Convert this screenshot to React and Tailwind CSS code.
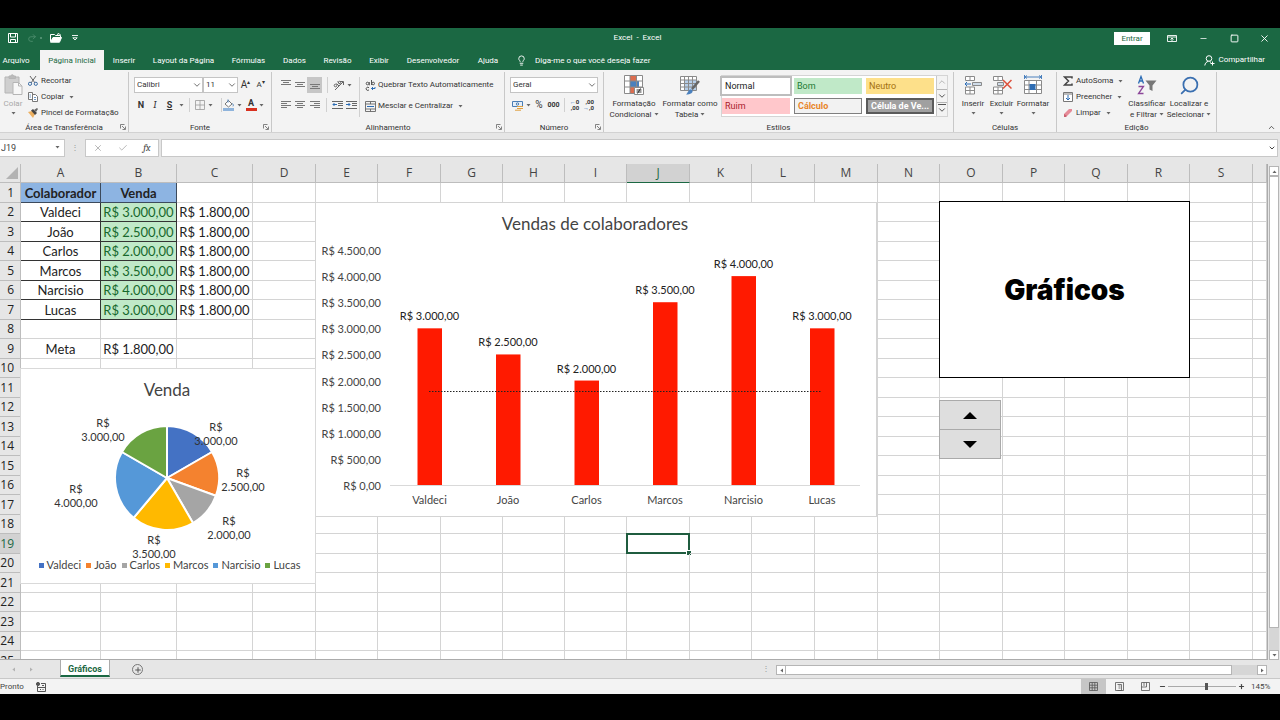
import { ChevronDown, Lightbulb, Minus, Plus, Redo2, Search, Square, X, Check } from "lucide-react";

const tabs = [
    { name: "Arquivo", width: "w-[32px] mr-2" },
    { name: "Página Inicial", width: "w-[64px]", active: true },
    { name: "Inserir", width: "w-[40px]" },
    { name: "Layout da Página", width: "w-[79px]" },
    { name: "Fórmulas", width: "w-[51px]" },
    { name: "Dados", width: "w-[41px]" },
    { name: "Revisão", width: "w-[45px]" },
    { name: "Exibir", width: "w-[38px]" },
    { name: "Desenvolvedor", width: "w-[70px]" },
    { name: "Ajuda", width: "w-[40px]" },
];

const styleCells = [
    { name: "Normal", look: "bg-white text-[#222] outline-2 outline-[#bdbdbd]" },
    { name: "Bom", look: "bg-[#c0e9c8] text-[#1d7a34]" },
    { name: "Neutro", look: "bg-[#fde08a] text-[#a3700f]" },
    { name: "Ruim", look: "bg-[#ffc7cb] text-[#a8202c]" },
    { name: "Cálculo", look: "bg-[#f2f2f2] text-[#e8862a] font-bold border border-[#7f7f7f]" },
    { name: "Célula de Ve...", look: "bg-[#a0a0a0] text-white font-bold border-2 border-[#5a5a5a]" },
];

const columns = [
    { name: "A", width: "w-[80px]" },
    { name: "B", width: "w-[76px]" },
    { name: "C", width: "w-[76px]" },
    { name: "D", width: "w-[63px]" },
    { name: "E", width: "w-[62px]" },
    { name: "F", width: "w-[63px]" },
    { name: "G", width: "w-[62px]" },
    { name: "H", width: "w-[62px]" },
    { name: "I", width: "w-[62px]" },
    { name: "J", width: "w-[63px]" },
    { name: "K", width: "w-[62px]" },
    { name: "L", width: "w-[63px]" },
    { name: "M", width: "w-[63px]" },
    { name: "N", width: "w-[62px]" },
    { name: "O", width: "w-[63px]" },
    { name: "P", width: "w-[62px]" },
    { name: "Q", width: "w-[63px]" },
    { name: "R", width: "w-[62px]" },
    { name: "S", width: "w-[63px]" },
    { name: "", width: "" },
];

const sales = [
    { name: "Valdeci", value: 3000, color: "#4472c4" },
    { name: "João", value: 2500, color: "#f4822f" },
    { name: "Carlos", value: 2000, color: "#a5a5a5" },
    { name: "Marcos", value: 3500, color: "#ffb900" },
    { name: "Narcisio", value: 4000, color: "#5598d8" },
    { name: "Lucas", value: 3000, color: "#6aa341" },
];

const meta = 1800;

const thousands = (value) =>
    value === 0 ? "0,00" : value < 1000 ? `${value},00` : `${Math.floor(value / 1000)}.${String(value % 1000).padStart(3, "0")},00`;
const money = (value) => `R$ ${thousands(value)}`;

const cells = { A1: "Colaborador", B1: "Venda", A9: "Meta", B9: money(meta) };
sales.forEach((sale, i) => {
    cells[`A${i + 2}`] = sale.name;
    cells[`B${i + 2}`] = money(sale.value);
    cells[`C${i + 2}`] = money(meta);
});

const cellLook = (col, row) => {
    if (row === 1 && (col === "A" || col === "B")) return "bg-[#8db4e2] font-bold border-[#3c4a5c]";
    if (row > 1 && row < 8 && col === "A") return "border-[#333]";
    if (row > 1 && row < 8 && col === "B") return "bg-[#c0e9c8] text-[#17682c] border-[#333]";
    return "border-[#d4d4d4]";
};

const Caret = () => (
    <svg className="w-[5px] h-[3px] shrink-0" viewBox="0 0 5 3">
        <path d="M0.5 0h4L2.5 2.6z" fill="#666" />
    </svg>
);

const CaretButton = ({ label }) => (
    <button aria-label={label} className="w-[8px] h-full flex items-center justify-center">
        <Caret />
    </button>
);

const Tool = ({ label, className, children }) => (
    <button aria-label={label} className={`h-full flex items-center justify-center ${className}`}>
        {children}
    </button>
);

const Divider = ({ className }) => <span className={`w-px h-full bg-[#d0d0d0] ${className}`} />;

const Group = ({ title, width, launcher, children }) => (
    <section className={`flex flex-col shrink-0 border-r border-[#c8c8c8] ${width}`}>
        <div className="flex h-[50px]">{children}</div>
        <div className="relative h-[10px] leading-[12px] text-center whitespace-nowrap">
            {title}
            {launcher && (
                <button aria-label={`Opções de ${title}`} className="absolute right-[2px] top-[2px]">
                    <svg className="size-[6px]" viewBox="0 0 6 6" fill="none" stroke="#666">
                        <path d="M0.5 4.5v-4h4M2 2l3 3M5.5 2.5v3h-3" strokeWidth="0.8" />
                    </svg>
                </button>
            )}
        </div>
    </section>
);

const BigButton = ({ lines, width, arrow, below, muted, children }) => (
    <button className={`flex flex-col items-center pt-[2px] shrink-0 whitespace-nowrap leading-[11px] ${width} ${muted ? "text-[#a8a8a8]" : ""}`}>
        <span className="h-[22px] mb-[2px] flex items-center">{children}</span>
        {lines.map((line, i) => (
            <span key={line} className="flex items-center gap-[2px]">
                {line}
                {arrow && i === lines.length - 1 && <Caret />}
            </span>
        ))}
        {below && <span className="h-[8px] flex items-center"><Caret /></span>}
    </button>
);

const SmallButton = ({ label, arrow, children }) => (
    <button className="h-[16px] flex items-center gap-[2px] whitespace-nowrap">
        <span className="w-[12px] flex justify-center shrink-0">{children}</span>
        {label}
        {arrow && <span className="ml-[3px]"><Caret /></span>}
    </button>
);

const RibbonSelect = ({ label, value, width }) => (
    <div className={`relative h-[16px] bg-white border border-[#c4c4c4] ${width}`}>
        <select aria-label={label} className="appearance-none w-full h-full pl-[2px] leading-[14px] bg-transparent">
            <option>{value}</option>
        </select>
        <ChevronDown className="absolute right-0 top-[2px] size-[10px] pointer-events-none text-[#555]" strokeWidth={2} />
    </div>
);

/* lines: list of [x1, x2] pairs, drawn 2px apart */
const LinesIcon = ({ lines, top = 1 }) => (
    <svg className="size-[10px]" viewBox="0 0 10 10" stroke="#777">
        {lines.map(([a, b], i) => (
            <path key={i} d={`M${a} ${top + i * 2 + 0.5}H${b}`} />
        ))}
    </svg>
);

const IndentIcon = ({ back }) => (
    <svg className="w-[12px] h-[10px]" viewBox="0 0 12 10" fill="none" stroke="#666">
        <path d="M0 1.5h11M6 3.5h5M6 5.5h5M0 8.5h11" />
        <path d={back ? "M5 4.5H1M2.5 3L1 4.5 2.5 6" : "M0 4.5h4M2.5 3L4 4.5 2.5 6"} stroke="#2b6cb5" />
    </svg>
);

const GridIcon = ({ className, children }) => (
    <svg className={className} viewBox="0 0 20 20" fill="none" stroke="#8a8a8a">
        {children}
    </svg>
);

const TitleBar = () => (
    <header className="bg-[#1b6843] text-white">
        <div className="h-[20px] flex items-center">
            <div className="flex-1 flex items-center pl-[7px]">
                <Tool label="Salvar" className="w-[12px]">
                    <svg className="size-[10px]" viewBox="0 0 10 10" fill="none" stroke="white">
                        <path d="M0.5 0.5h9v9h-9zM2.5 0.5v3.5h5v-3.5M2.5 9.5v-3h5v3" />
                    </svg>
                </Tool>
                <Tool label="Refazer" className="w-[12px] ml-[7px] text-[#4f8f70]"><Redo2 size={10} /></Tool>
                <span className="size-[2px] ml-[2px] bg-[#4f8f70]" />
                <Tool label="Abrir" className="w-[14px] ml-[7px]">
                    <svg className="w-[12px] h-[10px]" viewBox="0 0 12 10" fill="none" stroke="white">
                        <path d="M0.5 8.5V1.5h4l1 1h5v2" />
                        <path d="M0.5 9.2L3 4.5h8.500l-2 4.700z" fill="white" />
                        <path d="M7 1.500l2-1 1.500 1.500" />
                    </svg>
                </Tool>
                <Tool label="Personalizar acesso rápido" className="w-[8px] ml-[8px]">
                    <svg className="w-[6px] h-[6px]" viewBox="0 0 6 6" fill="none" stroke="white">
                        <path d="M0 0.500h6M0.800 2.800L3 5l2.200-2.200z" strokeWidth="0.9" />
                    </svg>
                </Tool>
            </div>
            <h1 className="pr-[12px] leading-[14px] whitespace-pre">Excel  -  Excel</h1>
            <div className="flex-1 flex items-center justify-end">
                <button className="h-[13px] w-[36px] mr-[14px] bg-white text-[#1b6843] leading-[13px]">Entrar</button>
                <Tool label="Opções de exibição" className="w-[16px] mr-[15px]">
                    <svg className="w-[10px] h-[7px]" viewBox="0 0 10 7" fill="none" stroke="white">
                        <path d="M0.500 0.500h9v6h-9zM0.500 2h9M5 6V3M3.500 4.500L5 3l1.500 1.500" strokeWidth="0.9" />
                    </svg>
                </Tool>
                <Tool label="Minimizar" className="w-[16px] mr-[15px]"><Minus size={9} strokeWidth={2} /></Tool>
                <Tool label="Maximizar" className="w-[16px] mr-[14px]"><Square size={9} strokeWidth={2.5} /></Tool>
                <Tool label="Fechar" className="w-[16px] mr-[8px]"><X size={11} strokeWidth={2} /></Tool>
            </div>
        </div>
        <nav className="h-[22px] flex items-end">
            {tabs.map((tab) => (
                <a key={tab.name} href="#" className={`h-[20px] leading-[21px] text-center whitespace-nowrap ${tab.width} ${tab.active ? "bg-[#f3f3f3] text-[#1b6843]" : ""}`}>
                    {tab.name}
                </a>
            ))}
            <label className="h-[20px] flex flex-1 items-center gap-[8px] ml-[8px]">
                <Lightbulb size={11} strokeWidth={2} />
                <input className="w-[140px] h-[20px] placeholder:text-white" placeholder="Diga-me o que você deseja fazer" />
            </label>
            <a href="#" className="h-[20px] flex items-center gap-[3px] pr-[15px]">
                <svg className="size-[11px]" viewBox="0 0 11 11" fill="none" stroke="white">
                    <circle cx="5" cy="3.500" r="2.800" />
                    <path d="M0.800 10.500c0.300-2.500 1.700-3.700 3.500-4.200M5.500 6.300l1.500 1.200M8.500 6.500v4M6.500 8.500h4" />
                </svg>
                Compartilhar
            </a>
        </nav>
    </header>
);

const Ribbon = () => (
    <div className="flex pt-[2px] bg-[#f3f3f3] text-[#333] border-b border-[#d2d2d2]">
        <Group title="Área de Transferência" width="w-[129px]" launcher>
            <BigButton lines={["Colar"]} width="w-[26px]" below muted>
                <svg className="w-[20px] h-[22px]" viewBox="0 0 20 22" fill="none" stroke="#b5b5b5">
                    <path d="M2 3h14v16H2z" fill="#cfcfcf" />
                    <path d="M6 4.500V2h2a1.200 1.200 0 0 1 2.500 0h2v2.500z" fill="#bbb" />
                    <path d="M10 8.500h5.500l3.500 3.500v8.500h-9z" fill="#f7f7f7" />
                    <path d="M15.500 8.500V12H19" />
                </svg>
            </BigButton>
            <div className="flex flex-col ml-[1px] pt-px">
                <SmallButton label="Recortar">
                    <svg className="size-[10px]" viewBox="0 0 10 10" fill="none">
                        <path d="M2 0l5 7M8 0L3 7" stroke="#666" />
                        <circle cx="2" cy="7.800" r="1.600" stroke="#3f6fa5" />
                        <circle cx="7.800" cy="7.800" r="1.600" stroke="#3f6fa5" />
                    </svg>
                </SmallButton>
                <SmallButton label="Copiar" arrow>
                    <svg className="size-[10px]" viewBox="0 0 10 10" fill="#fff" stroke="#777">
                        <path d="M0.500 0.500h4v7h-4z" />
                        <path d="M4.500 2.500h3l2 2v5h-5z" />
                        <path d="M6 5.500h2M6 7.500h2M1.500 3h1.500M1.500 5h1.500" stroke="#4a7db5" strokeWidth="0.8" />
                    </svg>
                </SmallButton>
                <SmallButton label="Pincel de Formatação">
                    <svg className="size-[10px]" viewBox="0 0 10 10">
                        <path d="M0 4l4-1 3 3-2 4z" fill="#edb060" />
                        <path d="M3 2.500l2-1.500 4 4-2 2z" fill="#444" />
                        <path d="M6 2l3-2 1 1-2 3z" fill="#666" />
                    </svg>
                </SmallButton>
            </div>
        </Group>

        <Group title="Fonte" width="w-[143px]" launcher>
            <div className="pl-[5px] pt-[5px] flex flex-col gap-[5px]">
                <div className="h-[16px] flex">
                    <RibbonSelect label="Fonte" value="Calibri" width="w-[69px]" />
                    <RibbonSelect label="Tamanho da fonte" value="11" width="w-[35px]" />
                    <Tool label="Aumentar fonte" className="w-[15px] text-[10px]">A<sup className="text-[6px]">▴</sup></Tool>
                    <Tool label="Diminuir fonte" className="w-[15px]">A<sup className="text-[6px]">▾</sup></Tool>
                </div>
                <div className="h-[14px] flex items-center">
                    <Tool label="Negrito" className="w-[14px] font-bold text-[9px]">N</Tool>
                    <Tool label="Itálico" className="w-[14px] italic font-serif text-[10px]">I</Tool>
                    <Tool label="Sublinhado" className="w-[15px] underline text-[9px] font-bold">S</Tool>
                    <CaretButton label="Opções de sublinhado" />
                    <Divider className="mx-[4px]" />
                    <Tool label="Bordas" className="w-[12px]">
                        <svg className="size-[10px]" viewBox="0 0 10 10" fill="none" stroke="#999">
                            <path d="M0.500 0.500h9v9h-9zM5 0.500v9M0.500 5h9" strokeWidth="0.8" />
                        </svg>
                    </Tool>
                    <CaretButton label="Opções de bordas" />
                    <Divider className="ml-[7px] mr-[1px]" />
                    <Tool label="Cor de preenchimento" className="w-[12px]">
                        <svg className="w-[12px] h-[12px]" viewBox="0 0 12 12" fill="none">
                            <path d="M2 5l3.500-3.500 3.500 3.500-3.500 3z" fill="#fff" stroke="#777" />
                            <path d="M5 0.500v3M9.500 4.500c1 1.500 1 2 0.500 2.800" stroke="#4a7db5" />
                            <path d="M0 9h11v3H0z" fill="#8fb4dc" />
                        </svg>
                    </Tool>
                    <CaretButton label="Opções de preenchimento" />
                    <Tool label="Cor da fonte" className="w-[12px] ml-[2px]">
                        <span className="w-[11px] h-[12px] border-b-[3px] border-[#d8301f] font-bold text-[9px] leading-[9px]">A</span>
                    </Tool>
                    <CaretButton label="Opções de cor" />
                </div>
            </div>
        </Group>

        <Group title="Alinhamento" width="w-[233px]" launcher>
            <div className="pl-[7px] pt-[5px] flex flex-col gap-[5px]">
                <div className="h-[16px] flex">
                    <Tool label="Alinhar em cima" className="w-[14px]"><LinesIcon top={0} lines={[[0, 10], [2, 8], [0, 10]]} /></Tool>
                    <Tool label="Alinhar no meio" className="w-[14px]"><LinesIcon top={2} lines={[[0, 10], [2, 8], [0, 10]]} /></Tool>
                    <Tool label="Alinhar embaixo" className="w-[15px] bg-[#c6c6c6]"><LinesIcon top={4} lines={[[0, 10], [2, 8], [0, 10]]} /></Tool>
                    <Divider className="mx-[5px]" />
                    <Tool label="Orientação" className="w-[12px]">
                        <svg className="size-[12px]" viewBox="0 0 12 12" fill="none" stroke="#666">
                            <path d="M2 11L10 3M10.500 6V2.500H7" />
                            <circle cx="2.500" cy="6.500" r="1.300" />
                            <path d="M3.500 4.500L6 7M4.500 2.500L7.500 5.500" />
                            <circle cx="6.500" cy="3.500" r="1.200" />
                        </svg>
                    </Tool>
                    <CaretButton label="Opções de orientação" />
                </div>
                <div className="h-[14px] flex">
                    <Tool label="Alinhar à esquerda" className="w-[14px]"><LinesIcon lines={[[0, 10], [0, 6], [0, 10], [0, 6]]} /></Tool>
                    <Tool label="Centralizar" className="w-[14px]"><LinesIcon lines={[[0, 10], [2, 8], [0, 10], [2, 8]]} /></Tool>
                    <Tool label="Alinhar à direita" className="w-[15px]"><LinesIcon lines={[[0, 10], [4, 10], [0, 10], [4, 10]]} /></Tool>
                    <Divider className="mx-[4px]" />
                    <Tool label="Diminuir recuo" className="w-[14px]"><IndentIcon back /></Tool>
                    <Tool label="Aumentar recuo" className="w-[14px]"><IndentIcon /></Tool>
                </div>
            </div>
            <div className="my-[5px] pl-[4px] border-l border-[#d0d0d0]">
                <SmallButton label="Quebrar Texto Automaticamente">
                    <svg className="size-[11px]" viewBox="0 0 11 11" fill="none" stroke="#555">
                        <circle cx="2.500" cy="3.500" r="1.300" />
                        <path d="M4.300 2v3.300M6.500 0v5M4 7.800a1.600 1.600 0 1 0 0 2" />
                        <circle cx="8.200" cy="3.500" r="1.300" />
                        <path d="M10 7v1.500H6.500M8 7L6.500 8.500 8 10" stroke="#2b6cb5" />
                    </svg>
                </SmallButton>
                <div className="mt-[5px]">
                    <SmallButton label="Mesclar e Centralizar" arrow>
                        <svg className="size-[11px]" viewBox="0 0 11 11" fill="none" stroke="#666">
                            <path d="M0.500 0.500h10v10h-10zM0.500 3h10M0.500 8h10M5.500 0.500V3M5.500 8v2.500" strokeWidth="0.9" />
                            <path d="M2 5.500h7" stroke="#2b6cb5" />
                        </svg>
                    </SmallButton>
                </div>
            </div>
        </Group>

        <Group title="Número" width="w-[99px]" launcher>
            <div className="pl-[5px] pt-[5px] flex flex-col gap-[5px]">
                <RibbonSelect label="Formato de número" value="Geral" width="w-[88px]" />
                <div className="h-[14px] flex items-center pl-[2px]">
                    <Tool label="Formato de contabilização" className="w-[12px]">
                        <svg className="w-[12px] h-[11px]" viewBox="0 0 12 11" fill="none">
                            <path d="M0.500 1.500h10v5h-10z" fill="#e5eef7" stroke="#4a7db5" />
                            <circle cx="5.500" cy="4" r="1.200" stroke="#4a7db5" />
                            <path d="M5 6.500h6M5 8.500h6M3 10.200h6" stroke="#e0a040" />
                        </svg>
                    </Tool>
                    <CaretButton label="Opções de moeda" />
                    <Tool label="Porcentagem" className="w-[14px] text-[10px]">%</Tool>
                    <Tool label="Separador de milhares" className="w-[15px] font-bold text-[7px]">000</Tool>
                    <Divider className="mx-[3px]" />
                    <Tool label="Aumentar casas decimais" className="w-[13px]">
                        <span className="text-[6px] leading-[6px] font-bold text-right"><i className="not-italic text-[#2b6cb5]">←</i>0<br />,00</span>
                    </Tool>
                    <Tool label="Diminuir casas decimais" className="w-[15px]">
                        <span className="text-[6px] leading-[6px] font-bold text-right">,00<br /><i className="not-italic text-[#2b6cb5]">→</i>,0</span>
                    </Tool>
                </div>
            </div>
        </Group>

        <Group title="Estilos" width="w-[350px]">
            <BigButton lines={["Formatação", "Condicional"]} width="w-[56px] ml-[2px]" arrow>
                <GridIcon className="size-[20px]">
                    <path d="M0.500 0.500h18v18h-18z" fill="#fff" />
                    <path d="M6 1h6v5H6zM6 12h6v6H6z" fill="#dc6d4f" stroke="none" />
                    <path d="M6 6h9v6H6z" fill="#4a80bd" stroke="none" />
                    <path d="M0.500 6h18M0.500 12h18M6 0.500v18M12.500 0.500v18" />
                    <path d="M10.500 12.500h9v7h-9z" fill="#fff" />
                    <path d="M12.500 15h5M12.500 17h5M16.500 13.500l-3 5" stroke="#333" />
                </GridIcon>
            </BigButton>
            <BigButton lines={["Formatar como", "Tabela"]} width="w-[56px]" arrow>
                <GridIcon className="size-[20px]">
                    <path d="M0.500 1.500h16v14h-16z" fill="#fff" />
                    <path d="M5 5h11v10H5z" fill="#b6cfea" stroke="none" />
                    <path d="M0.500 5h16M0.500 8.500h16M0.500 12h16M4.500 1.500v14M8.500 1.500v14M12.500 1.500v14" />
                    <path d="M19 6l-7 8" stroke="#666" strokeWidth="2.500" />
                    <path d="M6 19.500c1.500-1 2-4 4-5 2-0.500 3 1 2.500 2.500-1 2-4 2.500-6.500 2.500z" fill="#4a80bd" stroke="none" />
                </GridIcon>
            </BigButton>
            <div className="flex h-[42px] mt-[3px] ml-[3px] bg-white border border-[#d4d4d4]">
                <div className="grid grid-cols-3 gap-x-[4px] gap-y-[4px] py-[2px] pr-[2px]">
                    {styleCells.map((style) => (
                        <button key={style.name} className={`w-[68px] h-[16px] px-[3px] flex items-center text-[9px] whitespace-nowrap ${style.look}`}>
                            {style.name}
                        </button>
                    ))}
                </div>
                <div className="w-[11px] flex flex-col bg-[#f3f3f3] divide-y divide-[#b5b5b5] border-l border-[#c8c8c8]">
                    <button aria-label="Linha anterior" className="flex-1 flex items-center"><ChevronDown size={10} className="rotate-180 text-[#aaa]" /></button>
                    <button aria-label="Próxima linha" className="flex-1 flex items-center"><ChevronDown size={10} /></button>
                    <button aria-label="Mais estilos" className="flex-1 flex flex-col items-center justify-center"><span className="w-[8px] h-px bg-[#555]" /><ChevronDown size={10} /></button>
                </div>
            </div>
        </Group>

        <Group title="Células" width="w-[103px]">
            <BigButton lines={["Inserir"]} width="w-[30px] ml-[4px]" below>
                <GridIcon className="size-[20px]">
                    <path d="M2.500 1.500h9v4h-9zM7 1.500v4M2.500 12h9v7h-9zM2.500 15.500h9M7 12v7" fill="#fff" />
                    <path d="M9.500 7.500h9v3h-9z" fill="#cfdce9" />
                    <path d="M8 9H2M4 7L2 9l2 2" stroke="#2b6cb5" />
                </GridIcon>
            </BigButton>
            <BigButton lines={["Excluir"]} width="w-[27px]" below>
                <GridIcon className="size-[20px]">
                    <path d="M1.500 1.500h9v4h-9zM6 1.500v4M1.500 12h9v7h-9zM1.500 15.500h9M6 12v7" fill="#fff" />
                    <path d="M5.500 7.500h6v3h-6z" fill="#cfdce9" />
                    <path d="M11 5l8.500 8.500M19.500 5L11 13.500" stroke="#dc4f3a" strokeWidth="1.500" />
                </GridIcon>
            </BigButton>
            <BigButton lines={["Formatar"]} width="w-[36px]" below>
                <GridIcon className="size-[20px]">
                    <path d="M1.500 5.500h17v13h-17zM1.500 10h17M1.500 14.500h17M6 5.500v13M13.500 5.500v13" fill="#fff" />
                    <path d="M6.500 9h6v6h-6z" fill="#2f6db3" stroke="none" />
                    <path d="M2 2h16M4 0.500L2 2l2 1.500M16 0.500L18 2l-2 1.500M1.500 0v4M18.500 0v4" stroke="#4a80bd" />
                </GridIcon>
            </BigButton>
        </Group>

        <Group title="Edição" width="w-[160px]">
            <div className="w-[66px] pl-[5px] pt-px flex flex-col">
                <SmallButton label="AutoSoma" arrow>
                    <svg className="size-[10px]" viewBox="0 0 10 10" fill="none" stroke="#444">
                        <path d="M9 2.500V1H1.500l4 4-4 4H9V7.500" strokeWidth="1.500" />
                    </svg>
                </SmallButton>
                <SmallButton label="Preencher" arrow>
                    <svg className="size-[10px]" viewBox="0 0 10 10" fill="#fff" stroke="#777">
                        <path d="M0.500 0.500h9v9h-9z" />
                        <path d="M0.500 2h9" />
                        <path d="M5 3v5M3 6l2 2 2-2" stroke="#2b6cb5" fill="none" />
                    </svg>
                </SmallButton>
                <SmallButton label="Limpar" arrow>
                    <svg className="size-[10px]" viewBox="0 0 10 10">
                        <path d="M1 6l5-5h3v2L4 8H1z" fill="#e58a97" />
                        <path d="M1 6l3 2-1 1H1z" fill="#c9606f" />
                    </svg>
                </SmallButton>
            </div>
            <BigButton lines={["Classificar", "e Filtrar"]} width="w-[46px] ml-[1px]" arrow>
                <svg className="w-[20px] h-[20px]" viewBox="0 0 20 20" fill="none">
                    <path d="M1.500 8.500L4 1.500l2.500 7M2.300 6h3.400" stroke="#2b6cb5" strokeWidth="1.300" />
                    <path d="M1.500 11.500h5l-5 7h5" stroke="#8c4799" strokeWidth="1.300" />
                    <path d="M8.500 5.500h11l-4 5v5.500l-3-1.500v-4z" fill="#777" />
                </svg>
            </BigButton>
            <BigButton lines={["Localizar e", "Selecionar"]} width="w-[38px]" arrow>
                <Search size={21} strokeWidth={2} className="-scale-x-100 text-[#3a6fb0]" />
            </BigButton>
        </Group>

        <div className="flex-1 flex items-end justify-end pr-[4px]">
            <button aria-label="Recolher a faixa de opções"><ChevronDown size={9} className="rotate-180" /></button>
        </div>
    </div>
);

const FormulaBar = () => (
    <div className="h-[31px] shrink-0 pt-[6px] flex items-start bg-[#e6e6e6] text-[#444]">
        <div className="relative w-[65px] h-[18px] bg-white border border-l-0 border-[#c8c8c8]">
            <input aria-label="Caixa de nome" defaultValue="J19" className="w-full h-full pl-[1px] text-[9px]" />
            <span className="absolute right-[4px] top-[6px] flex"><Caret /></span>
        </div>
        <span className="w-[20px] h-[18px] flex items-center justify-center text-[#999]">⋮</span>
        <div className="w-[74px] h-[18px] flex items-center justify-around bg-white border border-[#c8c8c8]">
            <button aria-label="Cancelar" className="text-[#aaa]"><X size={10} /></button>
            <button aria-label="Inserir" className="text-[#aaa]"><Check size={10} /></button>
            <button aria-label="Inserir função" className="font-serif italic text-[10px]">fx</button>
        </div>
        <div className="relative flex-1 h-[18px] ml-[2px] mr-[2px] bg-white border border-[#c8c8c8]">
            <input aria-label="Barra de fórmulas" className="w-full h-full" />
            <ChevronDown size={8} strokeWidth={3} className="absolute right-[1px] top-[4px]" />
        </div>
    </div>
);

const BarChart = () => {
    const zero = 282;
    const y = (value) => zero - (value * 235) / 4500;
    const x = (i) => 113.5 + i * 78.5;
    return (
        <svg className="absolute left-[315px] top-[38px] w-[562px] h-[315px] bg-white border border-[#d4d4d4]" viewBox="0 0 560 313" fontFamily="Lato" fontSize="11" fill="#444">
            <text x="279" y="27" textAnchor="middle" fontSize="17">Vendas de colaboradores</text>
            {[0, 500, 1000, 1500, 2000, 2500, 3000, 3500, 4000, 4500].map((tick) => (
                <text key={tick} x="65" y={y(tick) + 5} textAnchor="end">{money(tick)}</text>
            ))}
            <path d="M74 282.5H544" stroke="#d9d9d9" />
            {sales.map((sale, i) => (
                <g key={sale.name} textAnchor="middle">
                    <rect x={x(i) - 12} y={y(sale.value)} width="24.5" height={zero - y(sale.value)} fill="#ff1a00" />
                    <text x={x(i)} y={y(sale.value) - 8} fill="#222">{money(sale.value)}</text>
                    <text x={x(i)} y="301">{sale.name}</text>
                </g>
            ))}
            <path d={`M113 ${y(meta) + 0.5}H506`} stroke="#222" strokeDasharray="1.5 1.5" />
        </svg>
    );
};

const pieLabels = [[195, 62], [222, 108], [208, 156], [133, 175], [55, 124], [82, 58]];

const PieChart = () => {
    const total = sales.reduce((sum, sale) => sum + sale.value, 0);
    const point = (part) => {
        const angle = (part / total) * 2 * Math.PI;
        return `${146 + 52 * Math.sin(angle)} ${109 - 52 * Math.cos(angle)}`;
    };
    let start = 0;
    return (
        <div className="absolute left-[20px] top-[204px] w-[296px] h-[216px] bg-white border border-[#d9d9d9]">
            <svg className="w-full h-[190px]" viewBox="0 0 294 190" fontFamily="Lato" fontSize="11" fill="#444" textAnchor="middle">
                <text x="146" y="27" fontSize="17">Venda</text>
                {sales.map((sale) => {
                    const from = point(start);
                    start += sale.value;
                    return <path key={sale.name} d={`M146 109L${from}A52 52 0 0 1 ${point(start)}z`} fill={sale.color} stroke="white" strokeWidth="2" />;
                })}
                {sales.map((sale, i) => (
                    <text key={sale.name} y={pieLabels[i][1]} fill="#333">
                        <tspan x={pieLabels[i][0]}>R$</tspan>
                        <tspan x={pieLabels[i][0]} dy="14">{thousands(sale.value)}</tspan>
                    </text>
                ))}
            </svg>
            <ul className="flex justify-center gap-[5px] pl-[3px] font-[Lato] text-[11px] leading-[12px] text-[#444]">
                {sales.map((sale) => (
                    <li key={sale.name} className="flex items-center gap-[3px]">
                        <span className="size-[5px]" style={{ backgroundColor: sale.color }} />
                        {sale.name}
                    </li>
                ))}
            </ul>
        </div>
    );
};

const Spinner = () => (
    <div className="absolute left-[939px] top-[236px] w-[62px] h-[59px] flex flex-col">
        <button aria-label="Aumentar" className="flex-1 flex items-center justify-center bg-[#dedede] border border-[#aaa]">
            <svg className="w-[14px] h-[7px]" viewBox="0 0 14 7"><path d="M0 7L7 0l7 7z" /></svg>
        </button>
        <button aria-label="Diminuir" className="flex-1 flex items-center justify-center bg-[#dedede] border border-t-0 border-[#aaa]">
            <svg className="w-[14px] h-[7px]" viewBox="0 0 14 7"><path d="M0 0h14L7 7z" /></svg>
        </button>
    </div>
);

const Sheet = () => (
    <main className="flex-1 min-h-0 flex bg-[#e6e6e6]">
        <div className="relative flex-1 overflow-hidden border-r border-b border-[#ababab]">
            <table className="w-full table-fixed border-separate border-spacing-0 bg-white font-[Lato] text-[13px] leading-[16px] text-[#222]">
                <thead>
                    <tr className="h-[19px] bg-[#e6e6e6] font-['Open_Sans'] text-[12px] text-[#444]">
                        <th className="w-[21px] p-0 border-r border-b border-[#bdbdbd]">
                            <svg className="size-[12px] ml-auto mr-[2px]" viewBox="0 0 12 12"><path d="M12 0v12H0z" fill="#b3b3b3" /></svg>
                        </th>
                        {columns.map((col) => (
                            <th key={col.name} className={`p-0 font-normal border-r border-b ${col.width} ${col.name === "J" ? "bg-[#d2d2d2] text-[#1b6843] border-b-[#1b6843] border-r-[#bdbdbd]" : "border-[#bdbdbd]"}`}>
                                {col.name}
                            </th>
                        ))}
                    </tr>
                </thead>
                <tbody>
                    {Array.from({ length: 25 }, (_, i) => i + 1).map((row) => (
                        <tr key={row} className="odd:h-[20px] even:h-[19px]">
                            <th className={`p-0 pr-[6px] text-right font-['Open_Sans'] text-[12px] font-normal border-r border-b ${row === 19 ? "bg-[#d2d2d2] text-[#1b6843] border-b-[#bdbdbd] border-r-[#1b6843]" : "bg-[#e6e6e6] border-[#bdbdbd]"}`}>
                                {row}
                            </th>
                            {columns.map((col) => (
                                <td key={col.name} className={`relative p-0 text-center whitespace-nowrap border-r border-b ${cellLook(col.name, row)}`}>
                                    {cells[col.name + row]}
                                    {col.name === "J" && row === 19 && (
                                        <span className="absolute -left-px -top-px -right-px -bottom-px border-2 border-[#1f5c3f]">
                                            <span className="absolute -right-[3px] -bottom-[3px] size-[4px] bg-[#1f5c3f] outline outline-white" />
                                        </span>
                                    )}
                                </td>
                            ))}
                        </tr>
                    ))}
                </tbody>
            </table>
            <BarChart />
            <PieChart />
            <div className="absolute left-[939px] top-[37px] w-[251px] h-[177px] flex items-center justify-center bg-white border border-black font-[Inter] font-black text-[28px] text-black">
                Gráficos
            </div>
            <Spinner />
        </div>
        <div className="w-[12px] pt-[2px] px-px flex flex-col">
            <button aria-label="Rolar para cima" className="h-[10px] flex items-center justify-center bg-white border border-[#b5b5b5]"><span className="rotate-180 flex"><Caret /></span></button>
            <div className="flex-1 pb-[22px] bg-[#d6d6d6]">
                <div className="h-full bg-white border border-[#b5b5b5]" />
            </div>
            <button aria-label="Rolar para baixo" className="h-[10px] flex items-center justify-center bg-white border border-[#b5b5b5]"><Caret /></button>
        </div>
    </main>
);

const SheetTabs = () => (
    <div className="h-[19px] shrink-0 flex items-start bg-[#e6e6e6] border-b border-[#c8c8c8]">
        <div className="w-[60px] h-full pl-[11px] flex items-center gap-[13px] opacity-40">
            <button aria-label="Planilha anterior" className="rotate-90"><Caret /></button>
            <button aria-label="Próxima planilha" className="-rotate-90"><Caret /></button>
        </div>
        <button className="w-[50px] h-[18px] -mt-px pt-[3px] bg-white border-x border-[#ababab] border-b-2 border-b-[#1b6843] text-[9px] font-bold text-[#1b6843]">
            Gráficos
        </button>
        <button aria-label="Nova planilha" className="ml-[22px] mt-[4px] size-[11px] flex items-center justify-center rounded-full border border-[#777] text-[#555]">
            <Plus size={8} strokeWidth={3} />
        </button>
        <div className="flex-1" />
        <span className="w-[20px] h-full flex items-center justify-center text-[#999]">⋮</span>
        <div className="w-[491px] h-[10px] mt-[5px] mr-[13px] flex bg-[#d6d6d6]">
            <button aria-label="Rolar para a esquerda" className="w-[10px] flex items-center justify-center bg-white border border-[#b5b5b5]"><span className="rotate-90 flex"><Caret /></span></button>
            <div className="flex-1 mr-[25px] bg-white border border-l-0 border-[#b5b5b5]" />
            <button aria-label="Rolar para a direita" className="w-[10px] flex items-center justify-center bg-white border border-[#b5b5b5]"><span className="-rotate-90 flex"><Caret /></span></button>
        </div>
    </div>
);

const StatusBar = () => (
    <footer className="h-[15px] shrink-0 flex items-center bg-[#f3f3f3] text-[#444]">
        <span className="w-[36px]">Pronto</span>
        <button aria-label="Gravar macro">
            <svg className="size-[10px]" viewBox="0 0 10 10" fill="none" stroke="#555">
                <path d="M1.500 4v5.500h8v-8H5M1.500 5.500h8M4 7.500h1M6.500 7.500h1M6 3.500h2" />
                <circle cx="2" cy="2" r="1.600" fill="#555" />
            </svg>
        </button>
        <div className="flex-1" />
        <Tool label="Normal" className="w-[25px] bg-[#c6c6c6]">
            <svg className="size-[9px]" viewBox="0 0 9 9" fill="none" stroke="#555"><path d="M0.500 0.500h8v8h-8zM0.500 3.200h8M0.500 5.800h8M3.200 0.500v8M5.800 0.500v8" strokeWidth="0.8" /></svg>
        </Tool>
        <Tool label="Layout da Página" className="w-[26px]">
            <svg className="size-[9px]" viewBox="0 0 9 9" fill="none" stroke="#555"><path d="M0.500 0.500h8v8h-8zM2.500 2.500h4v6h-4M3.500 4h2M3.500 6h2" strokeWidth="0.8" /></svg>
        </Tool>
        <Tool label="Visualização de quebra de página" className="w-[26px]">
            <svg className="size-[9px]" viewBox="0 0 9 9" fill="none" stroke="#555"><path d="M0.500 0.500h8v8h-8zM0.500 5h5V0.500M3 0.500V4" strokeWidth="0.8" /></svg>
        </Tool>
        <button aria-label="Reduzir" className="ml-[1px]"><Minus size={7} strokeWidth={4} /></button>
        <input
            aria-label="Zoom"
            type="range"
            min="0"
            max="100"
            defaultValue="57"
            className="w-[68px] h-[9px] mx-[2px] appearance-none bg-transparent [&::-webkit-slider-runnable-track]:h-px [&::-webkit-slider-runnable-track]:bg-[#aaa] [&::-webkit-slider-thumb]:appearance-none [&::-webkit-slider-thumb]:w-[3px] [&::-webkit-slider-thumb]:h-[7px] [&::-webkit-slider-thumb]:-mt-[3px] [&::-webkit-slider-thumb]:bg-[#555]"
        />
        <button aria-label="Ampliar"><Plus size={7} strokeWidth={4} /></button>
        <span className="w-[18px] ml-[6px] mr-[11px]">145%</span>
    </footer>
);

const App = () => {
    return (
        <div className="h-screen pt-[28px] pb-[26px] flex flex-col overflow-hidden bg-black font-[Roboto,sans-serif] text-[8px] leading-[12px]">
            <TitleBar />
            <Ribbon />
            <FormulaBar />
            <Sheet />
            <SheetTabs />
            <StatusBar />
        </div>
    );
};

export default App;
